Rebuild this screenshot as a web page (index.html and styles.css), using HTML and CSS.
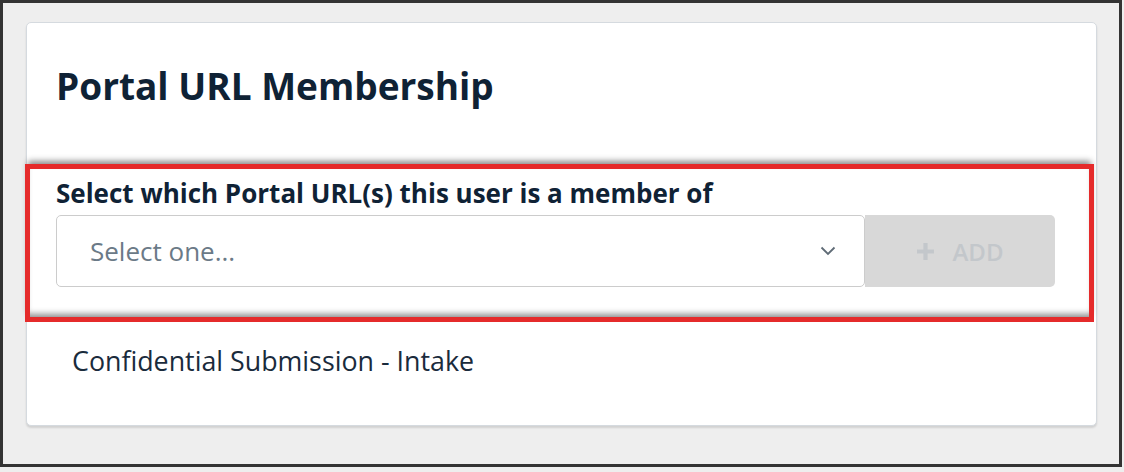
FILE: index.html
```html
<!DOCTYPE html>
<html>
<head>
<meta charset="utf-8">
<link rel="stylesheet" href="styles.css">
</head>
<body>
<div class="frame">
  <div class="card">
    <div class="card-header">
      <h1 class="title">Portal URL Membership</h1>
    </div>
    <div class="section">
      <label class="label">Select which Portal URL(s) this user is a member of</label>
      <div class="controls">
        <div class="select">
          <span class="placeholder">Select one...</span>
          <svg class="chevron" width="16" height="10" viewBox="0 0 16 10"><path d="M1.5 1.5 L8 8 L14.5 1.5" fill="none" stroke="#5f6b76" stroke-width="1.8"/></svg>
        </div>
        <button class="add-btn" disabled>
          <svg class="plus" width="19" height="19" viewBox="0 0 18 18"><path d="M9 1 V17 M1 9 H17" stroke="#c3c7cb" stroke-width="4"/></svg>
          <span>ADD</span>
        </button>
      </div>
    </div>
    <div class="list">
      <div class="item">Confidential Submission - Intake</div>
    </div>
  </div>
</div>
</body>
</html>
```
FILE: styles.css
```css
html, body {
  margin: 0;
  padding: 0;
  background: #eeeeee;
}
body {
  font-family: "Open Sans", "Noto Sans", sans-serif;
  color: #0f2235;
}
.frame {
  box-sizing: border-box;
  width: 1122px;
  height: 467px;
  border: 3px solid #333333;
  background: #eeeeee;
  padding: 19px 22px 39px 23px;
}
.card {
  box-sizing: border-box;
  height: 404px;
  background: #ffffff;
  border: 1px solid #d5dadf;
  border-radius: 5px;
  box-shadow: 0 2px 2px rgba(0, 0, 0, 0.12);
}
.card-header {
  height: 131px;
  padding-left: 29px;
  display: flex;
  align-items: center;
}
.title {
  margin: 0 0 6px 0;
  font-size: 37px;
  font-weight: 700;
  color: #0f2235;
  letter-spacing: 0;
}
.section {
  margin: 10px 2px 0 -2px;
  border: 5px solid #e52b2b;
  padding: 9px 34px 30px 26px;
  box-shadow: 0 -6px 6px -3px rgba(0, 0, 0, 0.45), inset 0 -7px 6px -4px rgba(0, 0, 0, 0.45);
}
.label {
  display: block;
  font-size: 26px;
  font-weight: 700;
  line-height: 30px;
  margin-bottom: 7px;
  color: #0f2235;
}
.controls {
  display: flex;
  height: 72px;
}
.select {
  box-sizing: border-box;
  width: 809px;
  height: 72px;
  border: 1px solid #cccccc;
  border-radius: 5px;
  display: flex;
  align-items: center;
  justify-content: space-between;
  padding: 0 28px 0 33px;
}
.placeholder {
  font-size: 26px;
  color: #6b7a87;
}
.chevron {
  display: block;
}
.add-btn {
  width: 190px;
  height: 72px;
  border: none;
  border-radius: 0 5px 5px 0;
  background: #d8d8d8;
  display: flex;
  align-items: center;
  justify-content: center;
  gap: 17px;
  font-family: "Open Sans", "Noto Sans", sans-serif;
  font-size: 24px;
  font-weight: 600;
  color: #c3c7cb;
  padding: 0;
}
.list {
  padding: 23px 0 0 45px;
}
.item {
  font-size: 26.8px;
  line-height: 32px;
  color: #1a2b3c;
}
```
